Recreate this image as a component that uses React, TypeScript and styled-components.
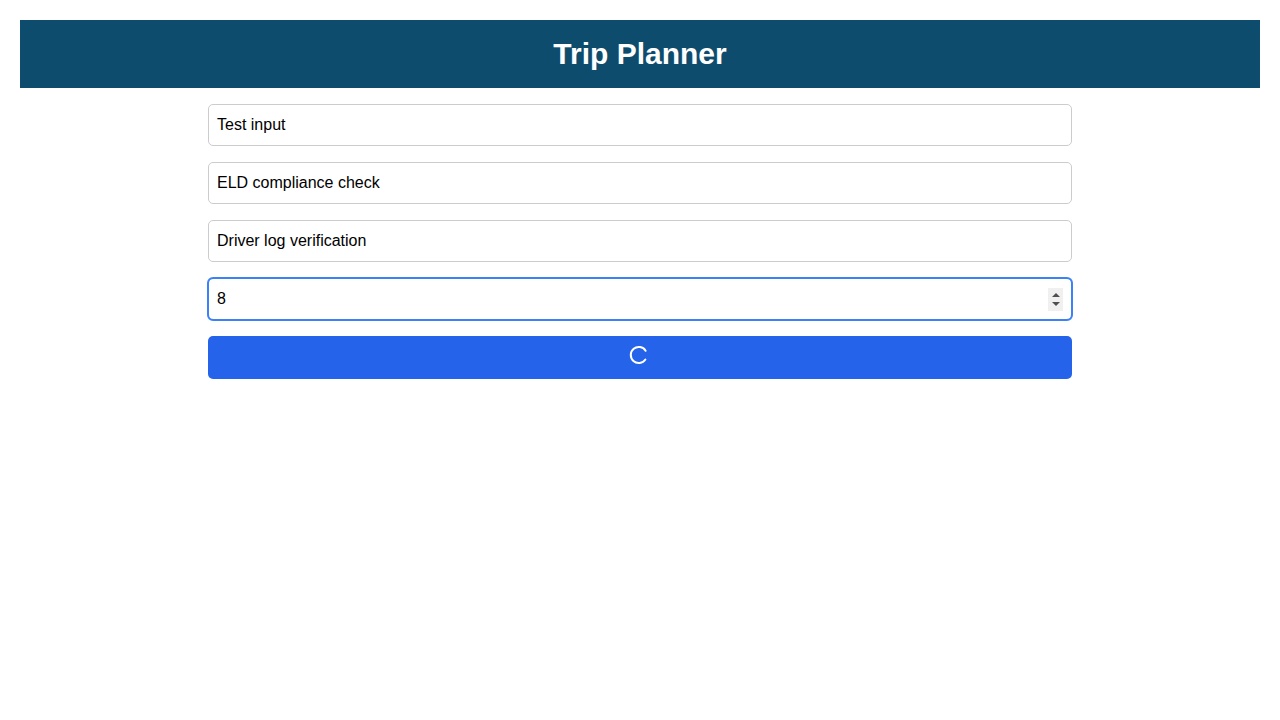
import React from "react";
import styled, { createGlobalStyle } from "styled-components";

const GlobalStyle = createGlobalStyle`
  html, body { margin: 0; padding: 0; background: #ffffff; }
  body { font-family: "Liberation Sans", Arial, sans-serif; }
  * { box-sizing: border-box; }
`;

const Page = styled.div`
  padding: 20px;
  display: flex;
  flex-direction: column;
  gap: 16px;
`;

const Header = styled.header`
  background: #0e4c6e;
  height: 68px;
  display: flex;
  align-items: center;
  justify-content: center;
`;

const Title = styled.h1`
  margin: 0;
  color: #ffffff;
  font-family: "Liberation Sans", Arial, sans-serif;
  font-size: 30px;
  font-weight: 700;
  line-height: 1;
`;

const Form = styled.form`
  width: 864px;
  margin: 0 auto;
  display: flex;
  flex-direction: column;
  gap: 16px;
`;

const Field = styled.input`
  width: 100%;
  height: 42px;
  padding: 0 8px;
  border: 1px solid #cccccc;
  border-radius: 5px;
  font-family: "Liberation Sans", Arial, sans-serif;
  font-size: 16px;
  color: #000000;
  background: #ffffff;

  &:focus {
    outline: 2px solid #3b82f6;
    outline-offset: -1px;
    border-color: #9fc0f5;
  }

  &::-webkit-inner-spin-button,
  &::-webkit-outer-spin-button {
    -webkit-appearance: none;
    margin: 0;
  }
  -moz-appearance: textfield;
`;

const NumberWrap = styled.div`
  position: relative;
`;

const SpinBox = styled.div`
  position: absolute;
  top: 10px;
  right: 9px;
  width: 15px;
  height: 23px;
  background: #f0f0f0;
  display: flex;
  flex-direction: column;
  align-items: center;
  justify-content: space-between;
  padding: 5px 0;
  pointer-events: none;
`;

const Arrow = styled.span<{ $down?: boolean }>`
  width: 0;
  height: 0;
  border-left: 4px solid transparent;
  border-right: 4px solid transparent;
  ${(p) =>
    p.$down
      ? "border-top: 4px solid #4f4f4f;"
      : "border-bottom: 4px solid #4f4f4f;"}
`;

const Submit = styled.button`
  height: 43px;
  width: 100%;
  border: none;
  border-radius: 5px;
  background: #2563eb;
  display: flex;
  align-items: center;
  justify-content: center;
  cursor: pointer;
  padding: 0;
`;

const Spinner = styled.svg`
  width: 20px;
  height: 20px;
  margin: 0 3px 5px 0;
`;

export default function App() {
  return (
    <>
      <GlobalStyle />
      <Page>
        <Header>
          <Title>Trip Planner</Title>
        </Header>
        <Form onSubmit={(e) => e.preventDefault()}>
          <Field type="text" defaultValue="Test input" />
          <Field type="text" defaultValue="ELD compliance check" />
          <Field type="text" defaultValue="Driver log verification" />
          <NumberWrap>
            <Field type="number" defaultValue={8} autoFocus />
            <SpinBox>
              <Arrow />
              <Arrow $down />
            </SpinBox>
          </NumberWrap>
          <Submit type="submit" aria-label="Loading">
            <Spinner viewBox="0 0 20 20">
              <path
                d="M16.6 5.8 A8 8 0 1 0 16.4 14.5"
                fill="none"
                stroke="#ffffff"
                strokeWidth="2"
                strokeLinecap="round"
              />
            </Spinner>
          </Submit>
        </Form>
      </Page>
    </>
  );
}
